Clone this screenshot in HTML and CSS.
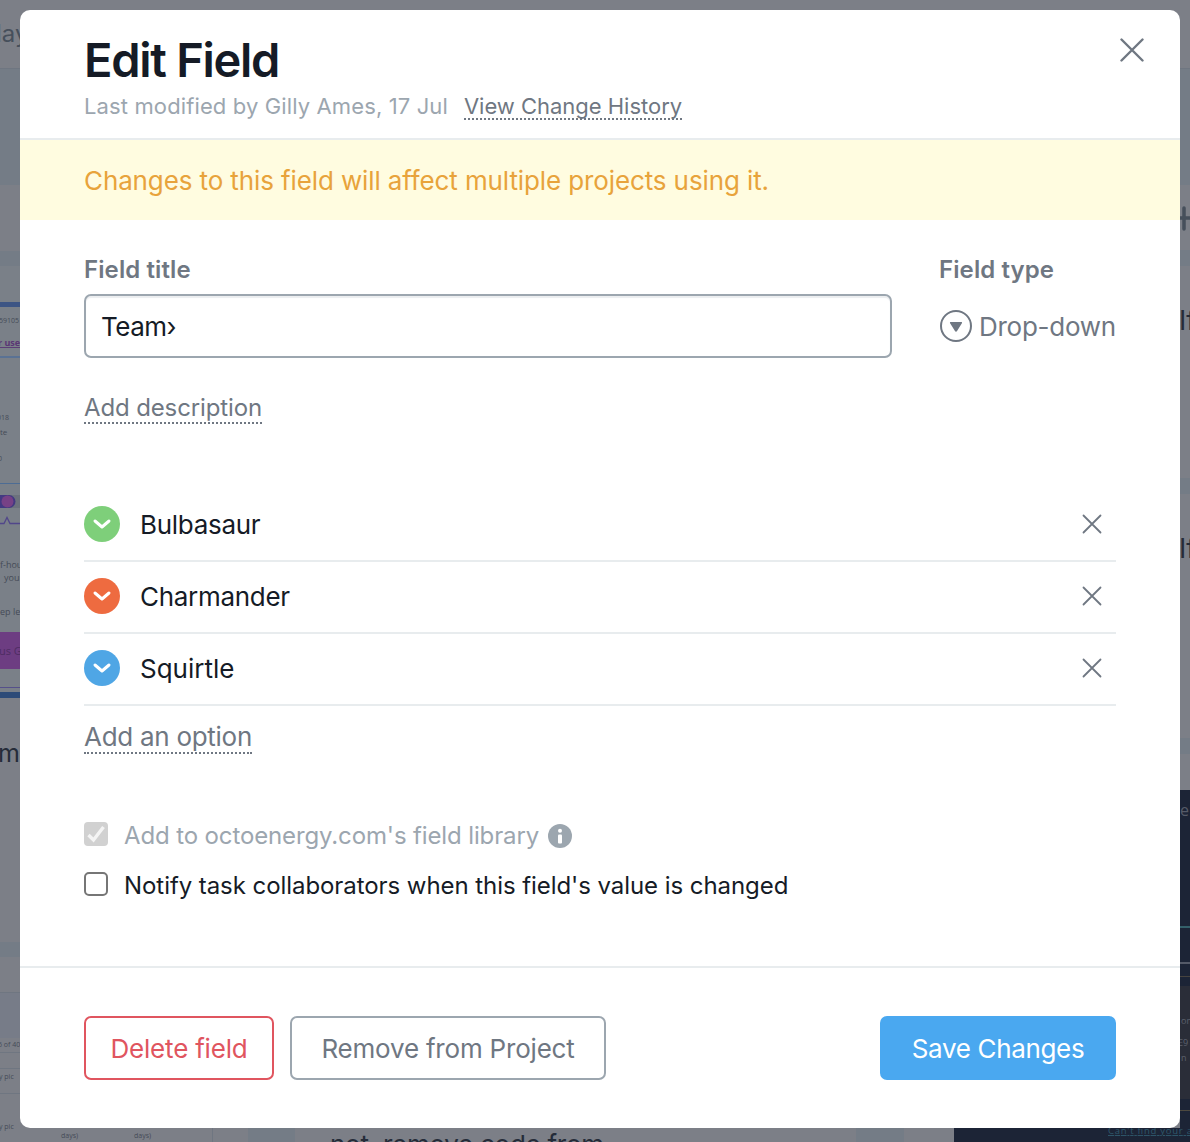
FILE: index.html
```
<!DOCTYPE html>
<html lang="en">
<head>
<meta charset="utf-8">
<title>Edit Field</title>
<link rel="stylesheet" href="styles.css">
</head>
<body>
<svg class="board" width="1190" height="1142" viewBox="0 0 1190 1142" aria-hidden="true">
  <rect width="1190" height="1142" fill="#7c7f87"/>
  <g fill="#747c86">
    <rect y="68" width="20" height="117"/>
    <rect x="1180" y="68" width="10" height="117"/>
    <rect y="251" width="20" height="15"/>
    <rect x="1180" y="250" width="10" height="16"/>
    <rect x="1180" y="478" width="10" height="16"/>
    <rect x="1180" y="738" width="10" height="16"/>
    <rect y="942" width="20" height="15"/>
    <rect x="248" y="1128" width="47" height="14"/>
    <rect x="856" y="1128" width="48" height="14"/>
  </g>
  <rect y="266" width="20" height="432" fill="#7a8088"/>
  <rect y="992" width="20" height="46" fill="#777c88"/>
  <g fill="#6f7681">
    <rect y="68" width="20" height="1"/><rect x="1180" y="68" width="10" height="1"/>
    <rect y="992" width="20" height="1"/><rect y="1052" width="20" height="1"/><rect y="1068" width="20" height="1"/>
    <rect y="1093" width="20" height="1"/><rect x="212" y="1128" width="1" height="14"/>
  </g>
  <rect y="302" width="20" height="5" fill="#3d5584"/>
  <rect y="356" width="20" height="2" fill="#5a7294"/>
  <rect y="483" width="20" height="1" fill="#4d6c94"/>
  <rect y="495" width="20" height="13" fill="#6c727d"/>
  <path d="M0 495h9a6.500 6.500 0 0 1 0 13H0z" fill="#433982"/>
  <circle cx="7.500" cy="501.500" r="6" fill="#774186"/>
  <path d="M0 523.500h4l3-6 3 6h10" fill="none" stroke="#51468a" stroke-width="1.300"/>
  <rect y="632" width="20" height="37" fill="#6d3d82"/>
  <rect y="687" width="20" height="1" fill="#55508a"/>
  <rect y="692" width="20" height="6" fill="#2d4b78"/>
  <g class="note">
    <text x="-1" y="323" font-size="7">59105</text>
    <text x="-2" y="346" font-size="9" font-weight="700" fill="#5a3674" text-decoration="underline">r user</text>
    <text x="-3" y="420" font-size="7">018</text>
    <text x="0" y="435" font-size="8">te</text>
    <text x="-2" y="461" font-size="7">0</text>
    <text x="0" y="568" font-size="9">f-hour</text>
    <text x="4" y="581" font-size="9">your</text>
    <text x="0" y="615" font-size="9">ep lea</text>
    <text x="-1" y="655" font-size="11" fill="#4d2c62">us Go</text>
    <text x="-2" y="1047" font-size="7">6 of 40</text>
    <text x="-1" y="1079" font-size="7">y pic</text>
    <text x="-1" y="1129" font-size="7">y pic</text>
    <text x="61" y="1138" font-size="7">days)</text>
    <text x="134" y="1138" font-size="7">days)</text>
  </g>
  <g class="card">
    <text x="-4" y="42" font-size="24" fill="#464f5b">lay</text>
    <text x="-2" y="762" font-size="25">m</text>
    <text x="1179" y="330" font-size="27">If</text>
    <text x="1179" y="558" font-size="27">If</text>
    <text x="330" y="1154" font-size="26" textLength="274">not, remove code from</text>
  </g>
  <path d="M1184 208v21M1180 218h10" stroke="#464f5b" stroke-width="3.500" stroke-linecap="round"/>
  <rect x="1180" y="790" width="10" height="352" fill="#1c2436"/>
  <rect x="954" y="1128" width="236" height="14" fill="#1c2436"/>
  <rect x="1180" y="986" width="10" height="113" fill="#2a2d38"/>
  <rect x="1180" y="926" width="10" height="2" fill="#34606a"/>
  <rect x="1180" y="962" width="10" height="2" fill="#545a68"/>
  <rect x="1180" y="976" width="10" height="1" fill="#46433f"/>
  <rect x="1180" y="1110" width="10" height="1" fill="#4d493f"/>
  <g class="note">
    <text x="1180" y="816" font-size="16" fill="#565b68">e</text>
    <text x="1181" y="1024" font-size="9" fill="#5b606c">on</text>
    <text x="1178" y="1046" font-size="9" fill="#5b606c">E9</text>
    <text x="1181" y="1061" font-size="9" fill="#5b606c">n</text>
    <text x="1108" y="1134" font-size="9.500" fill="#2f586c" text-decoration="underline" textLength="84">Can't find your a</text>
  </g>
</svg>

<main class="modal" role="dialog">
  <header class="head">
    <div>
      <h1 class="title">Edit Field</h1>
      <p class="meta"><span class="author">Last modified by Gilly Ames, 17 Jul</span><a class="link history">View Change History</a></p>
    </div>
    <svg class="close" viewBox="0 0 24 24"><path d="M1.500 1.500l21 21M22.500 1.500l-21 21"/></svg>
  </header>
  <p class="banner">Changes to this field will affect multiple projects using it.</p>
  <section class="body">
    <div class="fields">
      <div class="field">
        <label class="label">Field title</label>
        <div class="input">Team›</div>
      </div>
      <div class="type">
        <div class="label">Field type</div>
        <div class="type-value">
          <svg width="32" height="32" viewBox="0 0 32 32"><circle cx="16" cy="16" r="15" fill="none" stroke="#6f7782" stroke-width="2"/><path d="M10.700 12h10.600c.7 0 1 .7.600 1.200l-5 8c-.4.600-1.400.6-1.800 0l-5-8c-.4-.5-.1-1.200.6-1.200z" fill="#6f7782"/></svg>
          <span>Drop-down</span>
        </div>
      </div>
    </div>
    <a class="link describe">Add description</a>
    <ul class="options">
      <li class="option"><svg class="dot green" viewBox="0 0 36 36"><path d="M11 15l7 6 7-6"/></svg><span class="name">Bulbasaur</span><svg class="remove" viewBox="0 0 20 20"><path d="M1.500 1.500l17 17M18.500 1.500l-17 17"/></svg></li>
      <li class="option"><svg class="dot orange" viewBox="0 0 36 36"><path d="M11 15l7 6 7-6"/></svg><span class="name">Charmander</span><svg class="remove" viewBox="0 0 20 20"><path d="M1.500 1.500l17 17M18.500 1.500l-17 17"/></svg></li>
      <li class="option"><svg class="dot blue" viewBox="0 0 36 36"><path d="M11 15l7 6 7-6"/></svg><span class="name wide">Squirtle</span><svg class="remove" viewBox="0 0 20 20"><path d="M1.500 1.500l17 17M18.500 1.500l-17 17"/></svg></li>
    </ul>
    <a class="link add">Add an option</a>
    <div class="checks">
      <div class="check muted"><svg class="box" viewBox="0 0 24 24"><rect width="24" height="24" rx="4" fill="#d1d1d1"/><path d="M4.500 13l5 5L19.500 5" fill="none" stroke="#f4f4f4" stroke-width="3.400"/></svg><span class="check-text">Add to octoenergy.com's field library</span><svg class="info" viewBox="0 0 24 24"><circle cx="12" cy="12" r="12" fill="#9ca6af"/><circle cx="12" cy="6.800" r="2" fill="#fff"/><rect x="10" y="10.500" width="4" height="9" rx="1" fill="#fff"/></svg></div>
      <div class="check"><svg class="box" viewBox="0 0 24 24"><rect x="1" y="1" width="22" height="22" rx="4" fill="#fff" stroke="#767676" stroke-width="2"/></svg><span class="check-text">Notify task collaborators when this field's value is changed</span></div>
    </div>
  </section>
  <footer class="foot">
    <button class="btn delete">Delete field</button>
    <button class="btn detach">Remove from Project</button>
    <button class="btn save">Save Changes</button>
  </footer>
</main>
</body>
</html>
```
FILE: styles.css
```
* { box-sizing: border-box; }
body { margin: 0; width: 1190px; height: 1142px; overflow: hidden; position: relative; padding: 10px 20px 14px; font-family: Inter, "Liberation Sans", sans-serif; font-size: 26px; color: #151b26; }
h1, p, ul { margin: 0; padding: 0; }
.board { position: absolute; left: 0; top: 0; }
.note { font-family: "Open Sans", sans-serif; fill: #454b57; }
.card { fill: #252c39; }
.modal { position: relative; display: flex; flex-direction: column; width: 1160px; height: 1118px; border-radius: 10px; background: #fff; overflow: hidden; }
.head { display: flex; justify-content: space-between; height: 130px; padding: 20px 36px 0 64px; border-bottom: 2px solid #e8ecee; }
.title { font-size: 47px; line-height: 60px; font-weight: 600; letter-spacing: -1.270px; }
.meta { display: flex; gap: 16px; font-size: 22px; line-height: 26px; margin-top: 3px; color: #9ca6af; }
.author { letter-spacing: .125px; }
.close { width: 24px; height: 24px; margin-top: 8px; stroke: #6f7782; stroke-width: 2.400; stroke-linecap: round; }
.link { color: #6f7782; border-bottom: 2px dotted #6f7782; }
.history { height: 27px; letter-spacing: -.02px; }
.banner { height: 80px; padding: 0 64px; line-height: 82px; letter-spacing: -.115px; background: #fffce0; color: #e8a33b; }
.body { display: flex; flex-direction: column; align-items: flex-start; height: 746px; padding: 34px 64px 0; }
.fields { display: flex; justify-content: space-between; width: 100%; }
.field { width: 808px; }
.type { width: 177px; }
.label { display: block; font-size: 24px; line-height: 32px; font-weight: 600; letter-spacing: .1px; color: #6f7782; }
.input { height: 64px; margin-top: 8px; padding: 0 15px; border: 2px solid #9ca6af; border-radius: 7px; line-height: 62px; letter-spacing: -.5px; box-shadow: inset 0 2px 1px #eceef0; }
.type-value { display: flex; align-items: center; gap: 7px; height: 64px; margin: 8px 0 0 1px; color: #6f7782; letter-spacing: -.27px; white-space: nowrap; }
.describe { margin-top: 34px; font-size: 24px; height: 32px; line-height: 32px; letter-spacing: -.13px; }
.options { width: 100%; margin-top: 66px; list-style: none; }
.option { display: flex; align-items: center; height: 72px; padding: 0 14px 2px 0; border-bottom: 2px solid #e8ecee; }
.dot { width: 36px; height: 36px; border-radius: 50%; margin-right: 20px; fill: none; stroke: #fff; stroke-width: 3; stroke-linecap: round; stroke-linejoin: round; }
.green { background: #7ecf7a; }
.orange { background: #ee6b40; }
.blue { background: #4fa6e5; }
.name { flex: 1; letter-spacing: -.3px; }
.wide { letter-spacing: 0; }
.remove { width: 20px; height: 20px; stroke: #6f7782; stroke-width: 1.800; stroke-linecap: round; }
.add { height: 36px; margin-top: 12px; line-height: 38px; letter-spacing: -.28px; }
.checks { display: flex; flex-direction: column; gap: 14px; margin-top: 62px; font-size: 24px; }
.check { display: flex; align-items: center; height: 36px; letter-spacing: -.065px; }
.check-text { padding-top: 2px; }
.box { width: 24px; height: 24px; margin-right: 16px; }
.info { width: 24px; height: 24px; margin: 4px 0 0 9px; }
.muted { color: #9ca6af; letter-spacing: -.13px; }
.foot { display: flex; gap: 16px; height: 162px; padding: 48px 64px 0; border-top: 2px solid #e8ecee; }
.btn { height: 64px; padding: 0; border: 2px solid #9ca6af; border-radius: 7px; background: #fff; color: #6f7782; font: inherit; letter-spacing: -.2px; }
.delete { width: 190px; border-color: #e0555f; color: #e0555f; }
.detach { width: 316px; }
.save { width: 236px; margin-left: auto; border-color: #4aa8f0; background: #4aa8f0; color: #fff; letter-spacing: -.33px; }
```
